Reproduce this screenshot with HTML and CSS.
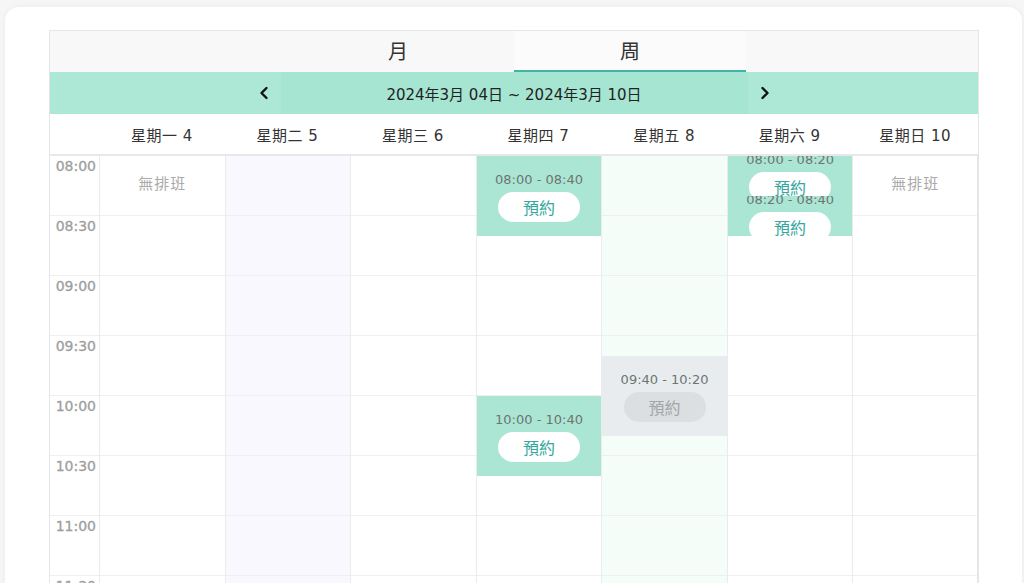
FILE: index.html
```html
<!DOCTYPE html>
<html lang="zh-Hant">
<head>
    <meta charset="UTF-8">
    <meta name="viewport" content="width=device-width, initial-scale=1.0">
    <title>預約排班</title>
    <link rel="stylesheet" href="styles.css">
</head>
<body>
    <div class="card">
        <div class="calendar">
            <div class="tabs">
                <div class="tab">月</div>
                <div class="tab active">周</div>
            </div>

            <div class="nav">
                <button type="button" class="nav-btn">
                    <svg width="10" height="14" viewBox="0 0 10 14"><polyline points="7.5,2 2.5,7 7.5,12" fill="none" stroke="#111" stroke-width="2.4" stroke-linecap="round" stroke-linejoin="round"/></svg>
                </button>
                <div class="nav-range">2024年3月 04日 ~ 2024年3月 10日</div>
                <button type="button" class="nav-btn">
                    <svg width="10" height="14" viewBox="0 0 10 14"><polyline points="2.5,2 7.5,7 2.5,12" fill="none" stroke="#111" stroke-width="2.4" stroke-linecap="round" stroke-linejoin="round"/></svg>
                </button>
            </div>

            <div class="day-head">
                <div></div>
                <div class="day-name">星期一 4</div>
                <div class="day-name">星期二 5</div>
                <div class="day-name">星期三 6</div>
                <div class="day-name">星期四 7</div>
                <div class="day-name">星期五 8</div>
                <div class="day-name">星期六 9</div>
                <div class="day-name">星期日 10</div>
            </div>

            <div class="week">
                <div class="times">
                    <div class="slot">08:00</div>
                    <div class="slot">08:30</div>
                    <div class="slot">09:00</div>
                    <div class="slot">09:30</div>
                    <div class="slot">10:00</div>
                    <div class="slot">10:30</div>
                    <div class="slot">11:00</div>
                    <div class="slot">11:30</div>
                </div>

                <!-- Monday -->
                <div class="day">
                    <div class="slot"></div><div class="slot"></div><div class="slot"></div><div class="slot"></div>
                    <div class="slot"></div><div class="slot"></div><div class="slot"></div><div class="slot"></div>
                    <div class="no-shift">無排班</div>
                </div>

                <!-- Tuesday -->
                <div class="day day-tue">
                    <div class="slot"></div><div class="slot"></div><div class="slot"></div><div class="slot"></div>
                    <div class="slot"></div><div class="slot"></div><div class="slot"></div><div class="slot"></div>
                </div>

                <!-- Wednesday -->
                <div class="day">
                    <div class="slot"></div><div class="slot"></div><div class="slot"></div><div class="slot"></div>
                    <div class="slot"></div><div class="slot"></div><div class="slot"></div><div class="slot"></div>
                </div>

                <!-- Thursday -->
                <div class="day">
                    <div class="slot"></div><div class="slot"></div><div class="slot"></div><div class="slot"></div>
                    <div class="slot"></div><div class="slot"></div><div class="slot"></div><div class="slot"></div>
                    <div class="event" style="top: 0px; height: 80px;">
                        <div class="event-time">08:00 - 08:40</div>
                        <button type="button" class="book-btn">預約</button>
                    </div>
                    <div class="event" style="top: 240px; height: 80px;">
                        <div class="event-time">10:00 - 10:40</div>
                        <button type="button" class="book-btn">預約</button>
                    </div>
                </div>

                <!-- Friday -->
                <div class="day day-fri">
                    <div class="slot"></div><div class="slot"></div><div class="slot"></div><div class="slot"></div>
                    <div class="slot"></div><div class="slot"></div><div class="slot"></div><div class="slot"></div>
                    <div class="event booked" style="top: 200px; height: 80px;">
                        <div class="event-time">09:40 - 10:20</div>
                        <button type="button" class="book-btn" disabled>預約</button>
                    </div>
                </div>

                <!-- Saturday -->
                <div class="day">
                    <div class="slot"></div><div class="slot"></div><div class="slot"></div><div class="slot"></div>
                    <div class="slot"></div><div class="slot"></div><div class="slot"></div><div class="slot"></div>
                    <div class="event" style="top: 0px; height: 40px;">
                        <div class="event-time">08:00 - 08:20</div>
                        <button type="button" class="book-btn">預約</button>
                    </div>
                    <div class="event" style="top: 40px; height: 40px;">
                        <div class="event-time">08:20 - 08:40</div>
                        <button type="button" class="book-btn">預約</button>
                    </div>
                </div>

                <!-- Sunday -->
                <div class="day">
                    <div class="slot"></div><div class="slot"></div><div class="slot"></div><div class="slot"></div>
                    <div class="slot"></div><div class="slot"></div><div class="slot"></div><div class="slot"></div>
                    <div class="no-shift">無排班</div>
                </div>
            </div>
        </div>
    </div>
</body>
</html>
```

FILE: styles.css
```css
* {
    margin: 0;
    padding: 0;
    box-sizing: border-box;
    font-family: "DejaVu Sans", "Noto Sans CJK TC", sans-serif;
}

body {
    background-color: #f6f6f6;
    padding: 7px 2px 0 5px;
    overflow: hidden;
}

.card {
    background-color: white;
    border-radius: 14px;
    padding: 23px 43px 0 44px;
    box-shadow: 0 0 6px rgba(0,0,0,0.05);
    height: 620px;
}

.calendar {
    border: 1px solid #e6e6e6;
    border-bottom: none;
}

/* month / week switch */
.tabs {
    display: flex;
    justify-content: center;
    background-color: #f8f8f8;
    height: 41px;
}

.tab {
    width: 232px;
    display: flex;
    align-items: center;
    justify-content: center;
    font-size: 20px;
    color: #333;
    border-bottom: 2px solid transparent;
}

.tab.active {
    background-color: #fbfbfb;
    border-bottom-color: #3fb4a7;
}

.nav {
    display: flex;
    justify-content: center;
    height: 42px;
    background-color: #ace8d5;
}

.nav-btn {
    width: 34px;
    border: none;
    background: none;
    display: flex;
    align-items: center;
    justify-content: center;
    cursor: pointer;
}

.nav-range {
    width: 467px;
    display: flex;
    align-items: center;
    justify-content: center;
    background-color: #a6e5d2;
    font-size: 15px;
    color: #222;
}

.day-head {
    display: grid;
    grid-template-columns: 49px repeat(7, 1fr);
    height: 42px;
    border-bottom: 2px solid #e8e8e8;
}

.day-name {
    display: flex;
    align-items: center;
    justify-content: center;
    font-size: 15px;
    letter-spacing: 0.5px;
    color: #333;
}

/* time grid */
.week {
    display: grid;
    grid-template-columns: 49px repeat(7, 1fr);
}

.slot {
    height: 60px;
    border-bottom: 1px solid #efefef;
}

.times .slot {
    text-align: right;
    padding: 2px 3px 0 0;
    font-size: 14px;
    color: #9e9e9e;
    -webkit-text-stroke: 0.3px #9e9e9e;
}

.day {
    position: relative;
    border-left: 1px solid #ebebeb;
}

.day:last-child {
    border-right: 1px solid #e6e6e6;
}

.day-tue {
    background-color: #f8f8fe;
}

.day-fri {
    background-color: #f5fdf8;
}

.no-shift {
    position: absolute;
    top: 16px;
    left: 0;
    right: 0;
    text-align: center;
    font-size: 15px;
    letter-spacing: 1px;
    color: #aaa;
}

.event {
    position: absolute;
    left: 0;
    right: 0;
    background-color: #abe6d4;
    overflow: hidden;
    display: flex;
    flex-direction: column;
    align-items: center;
    justify-content: center;
}

.event-time {
    font-size: 13px;
    line-height: 18px;
    color: #6d7572;
    margin-bottom: 3px;
    flex-shrink: 0;
}

.book-btn {
    width: 82px;
    height: 30px;
    flex-shrink: 0;
    border: none;
    border-radius: 15px;
    background-color: white;
    color: #33a79d;
    font-size: 16px;
    cursor: pointer;
}

.event.booked {
    background-color: #e9ecee;
}

.event.booked .book-btn {
    background-color: #dcdfe1;
    color: #a2a5a7;
    cursor: default;
}
```
